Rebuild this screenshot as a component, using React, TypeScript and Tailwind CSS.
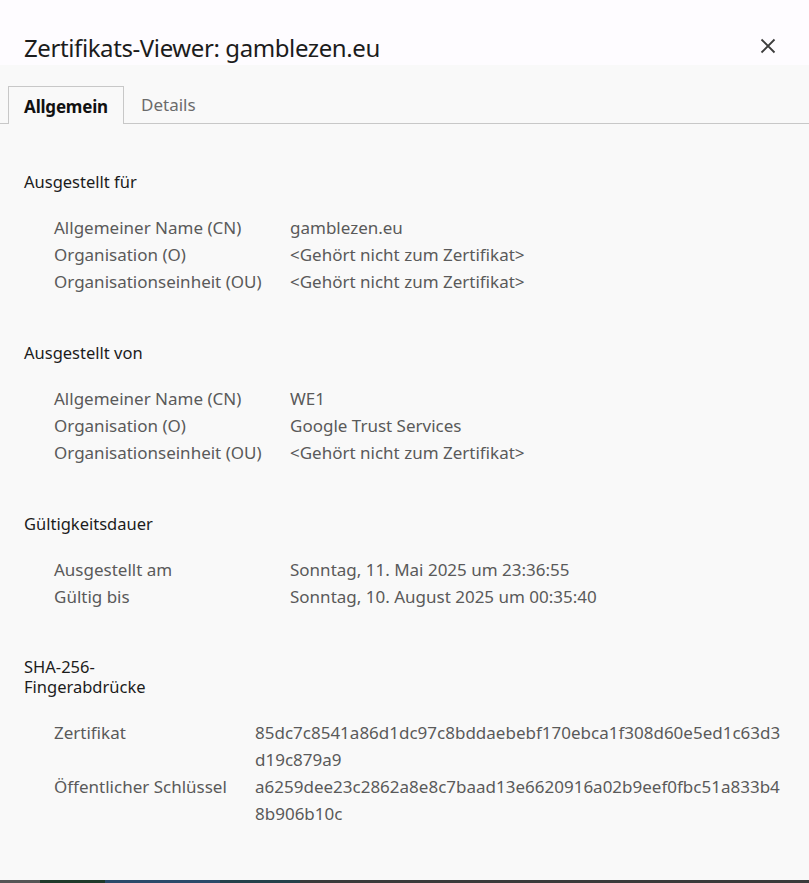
import React from "react";

const font = { fontFamily: '"Noto Sans", "Open Sans", sans-serif' };

function Row({ label, value, labelW = "w-[236px]" }: { label: string; value: React.ReactNode; labelW?: string }) {
  return (
    <div className="flex">
      <div className={`${labelW} shrink-0`}>{label}</div>
      <div>{value}</div>
    </div>
  );
}

function Section({
  title,
  children,
  gapTop,
  titleCls = "leading-[19px]",
  bodyTop = "mt-[23px]",
}: {
  title: React.ReactNode;
  children: React.ReactNode;
  gapTop: string;
  titleCls?: string;
  bodyTop?: string;
}) {
  return (
    <section className={gapTop}>
      <h2 className={`text-[16.5px] text-[#1c1c1c] ${titleCls}`}>{title}</h2>
      <div className={`${bodyTop} pl-[30px] text-[17px] leading-[27px] text-[#5a5a5a]`}>{children}</div>
    </section>
  );
}

export default function App() {
  return (
    <div className="w-[809px] h-[883px] bg-[#f9f9f9] flex flex-col overflow-hidden" style={font}>
      <header className="h-[65px] bg-[#fefcff] flex items-start justify-between pl-[24px] pr-[33px] shrink-0">
        <h1 className="mt-[31px] text-[24px] leading-[34px] text-[#1c1c1c] tracking-[-0.4px]">Zertifikats-Viewer: gamblezen.eu</h1>
        <svg width="16" height="16" viewBox="0 0 16 16" className="mt-[38px]">
          <path d="M1.5 1.5 L14.5 14.5 M14.5 1.5 L1.5 14.5" stroke="#3c3c3c" strokeWidth="1.8" />
        </svg>
      </header>
      <nav className="mt-[21px] flex items-end border-b border-[#c8c8c8] h-[38px] pl-[8px]">
        <div className="h-[38px] w-[116px] border border-b-0 border-[#c8c8c8] bg-[#f9f9f9] mb-[-1px] flex items-center justify-center pt-[2px] text-[17px] font-bold text-[#111] tracking-[-0.2px]">
          Allgemein
        </div>
        <div className="h-[38px] px-[17px] pt-[2px] flex items-center text-[17px] text-[#6b6b6b]">Details</div>
      </nav>
      <main className="pl-[24px] flex-1">
        <Section title="Ausgestellt für" gapTop="mt-[48px]">
          <Row label="Allgemeiner Name (CN)" value="gamblezen.eu" />
          <Row label="Organisation (O)" value="<Gehört nicht zum Zertifikat>" />
          <Row label="Organisationseinheit (OU)" value="<Gehört nicht zum Zertifikat>" />
        </Section>
        <Section title="Ausgestellt von" gapTop="mt-[48px]">
          <Row label="Allgemeiner Name (CN)" value="WE1" />
          <Row label="Organisation (O)" value="Google Trust Services" />
          <Row label="Organisationseinheit (OU)" value="<Gehört nicht zum Zertifikat>" />
        </Section>
        <Section title="Gültigkeitsdauer" gapTop="mt-[48px]">
          <Row label="Ausgestellt am" value="Sonntag, 11. Mai 2025 um 23:36:55" />
          <Row label="Gültig bis" value="Sonntag, 10. August 2025 um 00:35:40" />
        </Section>
        <Section
          title={
            <>
              SHA-256-
              <br />
              Fingerabdrücke
            </>
          }
          gapTop="mt-[47px]"
          titleCls="leading-[20px]"
          bodyTop="mt-[22px]"
        >
          <Row
            labelW="w-[201px]"
            label="Zertifikat"
            value={
              <>
                <span className="block">85dc7c8541a86d1dc97c8bddaebebf170ebca1f308d60e5ed1c63d3</span>
                <span className="block">d19c879a9</span>
              </>
            }
          />
          <Row
            labelW="w-[201px]"
            label="Öffentlicher Schlüssel"
            value={
              <>
                <span className="block">a6259dee23c2862a8e8c7baad13e6620916a02b9eef0fbc51a833b4</span>
                <span className="block">8b906b10c</span>
              </>
            }
          />
        </Section>
      </main>
      <div className="h-[3px] bg-[#3a3a3a] shrink-0 flex">
        <div className="w-[40px] bg-[#555]" />
        <div className="w-[65px] bg-[#1f3a2a]" />
        <div className="w-[115px] bg-[#2a4a6a]" />
        <div className="w-[80px] bg-[#23414a]" />
      </div>
    </div>
  );
}
